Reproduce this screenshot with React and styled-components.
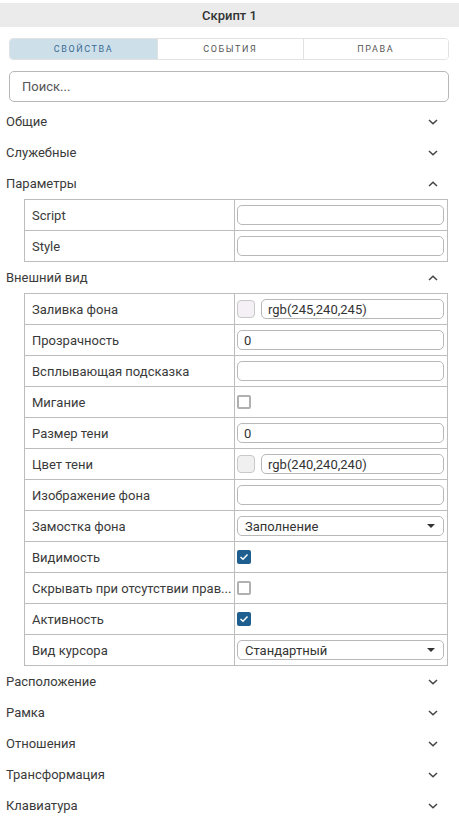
import React from "react";
import styled, { createGlobalStyle } from "styled-components";

const GlobalStyle = createGlobalStyle`
  html, body {
    margin: 0;
    padding: 0;
    background: #fff;
  }
  body {
    font-family: Roboto, "Noto Sans", sans-serif;
    color: #3a3a3a;
  }
`;

const Panel = styled.div`
  width: 459px;
  padding-top: 3px;
  display: flex;
  flex-direction: column;
`;

const Title = styled.div`
  height: 24px;
  background: #ebebeb;
  display: flex;
  align-items: center;
  justify-content: center;
  font-size: 13px;
  font-weight: 500;
  color: #333;
`;

const Tabs = styled.div`
  margin: 11px 10px 0 9px;
  height: 22px;
  display: grid;
  grid-template-columns: 147px 1fr 1fr;
  border: 1px solid #e2e2e2;
  border-radius: 4px;
  overflow: hidden;
  box-sizing: border-box;
`;

const Tab = styled.div`
  display: flex;
  align-items: center;
  justify-content: center;
  font-size: 9px;
  letter-spacing: 1.6px;
  text-transform: uppercase;
  color: ${(p) => (p.$active ? "#3a6a92" : "#555")};
  background: ${(p) => (p.$active ? "#cde0ea" : "#fff")};
  & + & {
    border-left: 1px solid #e2e2e2;
  }
`;

const Search = styled.div`
  margin: 11px 10px 0 9px;
  height: 31px;
  border: 1px solid #b8b8b8;
  border-radius: 5px;
  box-sizing: border-box;
  display: flex;
  align-items: center;
  padding-left: 12px;
  font-size: 13px;
  color: #555;
`;

const Sections = styled.div`
  margin-top: 4px;
  display: flex;
  flex-direction: column;
`;

const SectionHead = styled.div`
  height: 31px;
  display: flex;
  align-items: center;
  justify-content: space-between;
  padding: 0 21px 0 6px;
  font-size: 13px;
  color: #3a3a3a;
`;

const Table = styled.div`
  margin: 0 11px 0 24px;
  border: 1px solid #bdbdbd;
  border-bottom: none;
  display: flex;
  flex-direction: column;
`;

const Row = styled.div`
  height: 31px;
  display: grid;
  grid-template-columns: 210px 1fr;
  border-bottom: 1px solid #bdbdbd;
  box-sizing: border-box;
`;

const Label = styled.div`
  display: flex;
  align-items: center;
  padding-left: 7px;
  font-size: 13px;
  color: #3a3a3a;
  white-space: nowrap;
  overflow: hidden;
  border-right: 1px solid #bdbdbd;
`;

const Value = styled.div`
  display: flex;
  align-items: center;
  gap: 6px;
  padding: 0 3px 0 2px;
`;

const Field = styled.div`
  flex: 1;
  height: 20px;
  border: 1px solid #b8b8b8;
  border-radius: 5px;
  box-sizing: border-box;
  display: flex;
  align-items: center;
  justify-content: space-between;
  padding: 0 8px 0 ${(p) => (p.$select ? "7px" : "6px")};
  font-size: 13px;
  color: #333;
`;

const Swatch = styled.div`
  width: 18px;
  height: 18px;
  border: 1px solid #c8c8c8;
  border-radius: 4px;
  box-sizing: border-box;
  background: ${(p) => p.$color};
`;

const Check = styled.div`
  width: 14px;
  height: 14px;
  border-radius: 2px;
  box-sizing: border-box;
  border: ${(p) => (p.$on ? "none" : "2px solid #b0b0b0")};
  background: ${(p) => (p.$on ? "#1e5f8f" : "#fff")};
  display: flex;
  align-items: center;
  justify-content: center;
`;

const Chevron = ({ up }) => (
  <svg width="10" height="6" viewBox="0 0 10 6">
    <path
      d={up ? "M1 5L5 1.2L9 5" : "M1 1L5 4.8L9 1"}
      fill="none"
      stroke="#444"
      strokeWidth="1.5"
    />
  </svg>
);

const Caret = () => (
  <svg width="8" height="4" viewBox="0 0 8 4">
    <path d="M0 0H8L4 4Z" fill="#333" />
  </svg>
);

const Tick = () => (
  <svg width="10" height="8" viewBox="0 0 10 8">
    <path d="M1.5 4L4 6.3L8.5 1.5" fill="none" stroke="#fff" strokeWidth="1.5" />
  </svg>
);

function Control({ item }) {
  switch (item.type) {
    case "text":
      return <Field>{item.value}</Field>;
    case "color":
      return (
        <>
          <Swatch $color={item.color} />
          <Field>{item.value}</Field>
        </>
      );
    case "check":
      return <Check $on={item.on}>{item.on && <Tick />}</Check>;
    case "select":
      return (
        <Field $select>
          {item.value}
          <Caret />
        </Field>
      );
    default:
      return null;
  }
}

function PropTable({ rows }) {
  return (
    <Table>
      {rows.map((r) => (
        <Row key={r.label}>
          <Label>{r.label}</Label>
          <Value>
            <Control item={r} />
          </Value>
        </Row>
      ))}
    </Table>
  );
}

const params = [
  { label: "Script", type: "text", value: "" },
  { label: "Style", type: "text", value: "" },
];

const look = [
  { label: "Заливка фона", type: "color", color: "rgb(245,240,245)", value: "rgb(245,240,245)" },
  { label: "Прозрачность", type: "text", value: "0" },
  { label: "Всплывающая подсказка", type: "text", value: "" },
  { label: "Мигание", type: "check", on: false },
  { label: "Размер тени", type: "text", value: "0" },
  { label: "Цвет тени", type: "color", color: "rgb(240,240,240)", value: "rgb(240,240,240)" },
  { label: "Изображение фона", type: "text", value: "" },
  { label: "Замостка фона", type: "select", value: "Заполнение" },
  { label: "Видимость", type: "check", on: true },
  { label: "Скрывать при отсутствии прав...", type: "check", on: false },
  { label: "Активность", type: "check", on: true },
  { label: "Вид курсора", type: "select", value: "Стандартный" },
];

const Section = ({ title, open }) => (
  <SectionHead>
    {title}
    <Chevron up={open} />
  </SectionHead>
);

export default function App() {
  return (
    <>
      <GlobalStyle />
      <Panel>
        <Title>Скрипт 1</Title>
        <Tabs>
          <Tab $active>Свойства</Tab>
          <Tab>События</Tab>
          <Tab>Права</Tab>
        </Tabs>
        <Search>Поиск...</Search>
        <Sections>
          <Section title="Общие" />
          <Section title="Служебные" />
          <Section title="Параметры" open />
          <PropTable rows={params} />
          <Section title="Внешний вид" open />
          <PropTable rows={look} />
          <Section title="Расположение" />
          <Section title="Рамка" />
          <Section title="Отношения" />
          <Section title="Трансформация" />
          <Section title="Клавиатура" />
        </Sections>
      </Panel>
    </>
  );
}
